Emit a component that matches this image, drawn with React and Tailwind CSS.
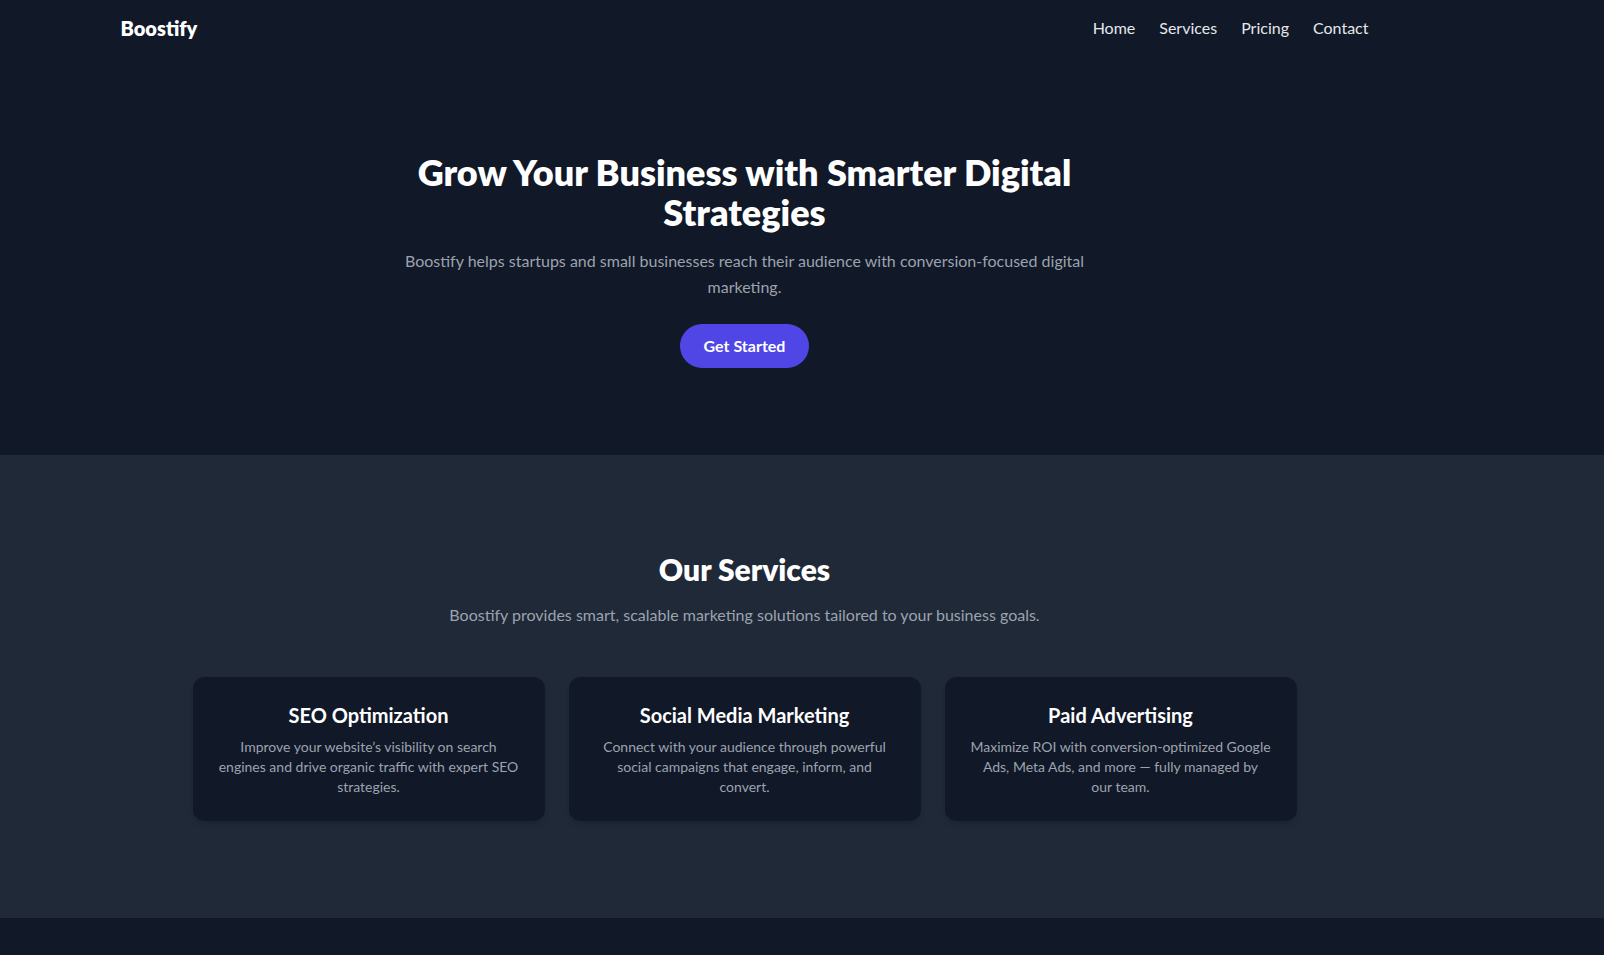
import React from "react";

const services = [
  {
    title: "SEO Optimization",
    text: "Improve your website’s visibility on search engines and drive organic traffic with expert SEO strategies.",
  },
  {
    title: "Social Media Marketing",
    text: "Connect with your audience through powerful social campaigns that engage, inform, and convert.",
  },
  {
    title: "Paid Advertising",
    text: "Maximize ROI with conversion-optimized Google Ads, Meta Ads, and more — fully managed by our\u00a0team.",
  },
];

export default function App() {
  return (
    <div
      className="min-h-screen bg-[#111827] text-white"
      style={{ fontFamily: "Lato, 'Open Sans', sans-serif" }}
    >
      {/* Navbar */}
      <header className="bg-[#111827] pr-[115px]">
        <nav className="max-w-[1280px] mx-auto px-4 h-14 flex items-center justify-between">
          <span className="text-xl font-extrabold">Boostify</span>
          <ul className="flex gap-6 text-base text-[#e5e7eb]">
            <li><a href="#">Home</a></li>
            <li><a href="#">Services</a></li>
            <li><a href="#">Pricing</a></li>
            <li><a href="#">Contact</a></li>
          </ul>
        </nav>
      </header>

      {/* Hero */}
      <section className="bg-[#111827] pr-[115px] pt-24 pb-[87px]">
        <div className="max-w-3xl mx-auto px-4 text-center">
          <h1 className="text-4xl font-extrabold mb-4">
            Grow Your Business with Smarter Digital Strategies
          </h1>
          <p className="text-base leading-relaxed text-[#9ca3af] mb-6">
            Boostify helps startups and small businesses reach their audience with conversion-focused digital marketing.
          </p>
          <button className="px-6 py-2.5 bg-[#4f46e5] rounded-full font-bold hover:bg-[#4338ca] transition">
            Get Started
          </button>
        </div>
      </section>

      {/* Services */}
      <section className="bg-[#1f2937] pr-[115px] pt-24 pb-[97px]">
        <div className="max-w-6xl mx-auto px-6 text-center">
          <h2 className="text-3xl font-extrabold mb-4">Our Services</h2>
          <p className="text-base text-[#9ca3af] mb-[50px]">
            Boostify provides smart, scalable marketing solutions tailored to your business goals.
          </p>
          <div className="grid grid-cols-3 gap-6">
            {services.map((s) => (
              <div key={s.title} className="bg-[#111827] rounded-xl p-6 shadow-md">
                <h3 className="text-xl font-bold mb-2">{s.title}</h3>
                <p className="text-sm text-[#9ca3af]">{s.text}</p>
              </div>
            ))}
          </div>
        </div>
      </section>

      <footer className="bg-[#111827] h-10" />
    </div>
  );
}
